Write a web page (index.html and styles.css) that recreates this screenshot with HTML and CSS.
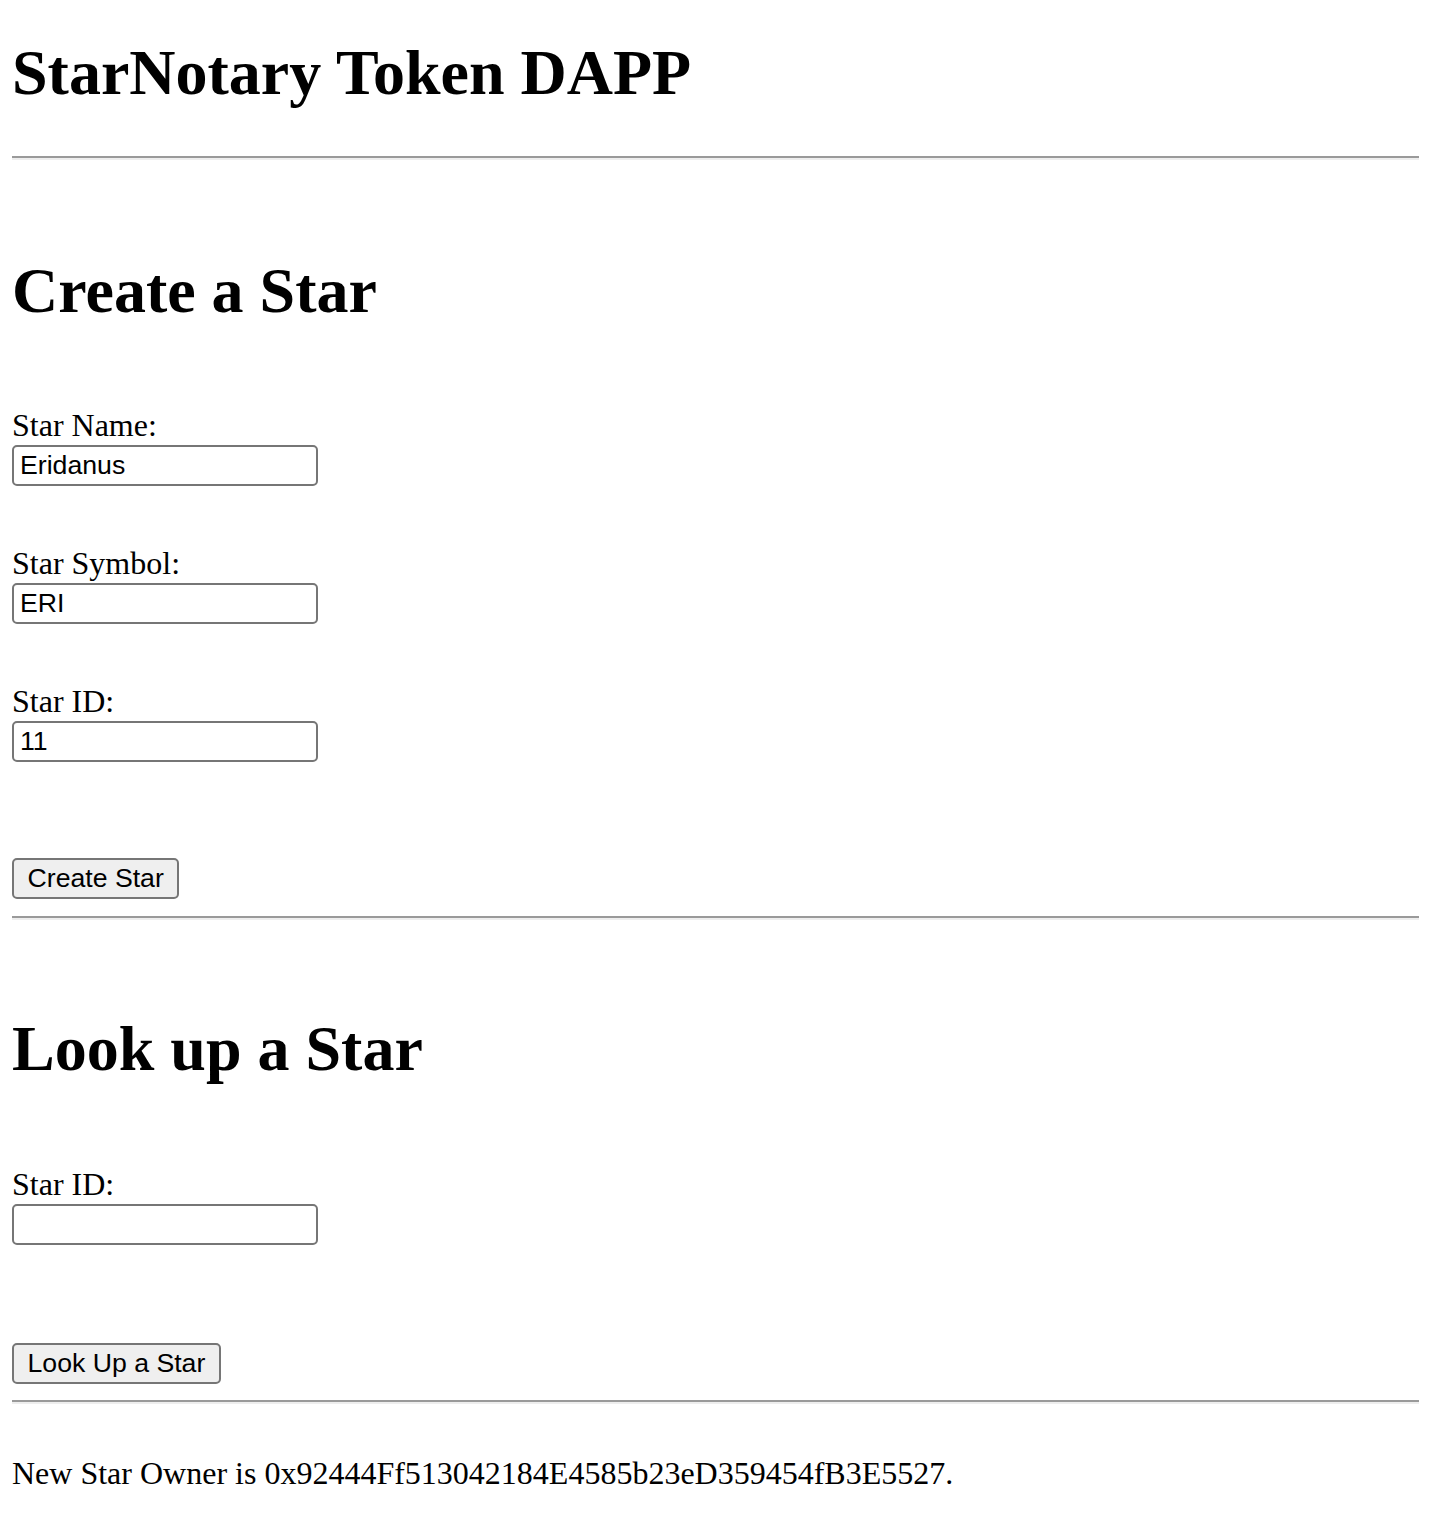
FILE: index.html
```html
<!DOCTYPE html>
<html lang="en">
<head>
<meta charset="utf-8">
<title>StarNotary Token DAPP</title>
<link rel="stylesheet" href="styles.css">
</head>
<body>
<h1 class="title">StarNotary Token DAPP</h1>
<hr class="rule rule-top">

<section class="create">
  <h1 class="heading heading-create">Create a Star</h1>
  <div class="field field-first">
    <label class="label" for="starName">Star Name:</label>
    <input class="input" id="starName" type="text" value="Eridanus">
  </div>
  <div class="field">
    <label class="label" for="starSymbol">Star Symbol:</label>
    <input class="input" id="starSymbol" type="text" value="ERI">
  </div>
  <div class="field">
    <label class="label" for="starId">Star ID:</label>
    <input class="input" id="starId" type="text" value="11">
  </div>
  <button class="btn btn-create" type="button">Create Star</button>
</section>
<hr class="rule rule-mid">

<section class="lookup">
  <h1 class="heading heading-lookup">Look up a Star</h1>
  <div class="field field-lookup">
    <label class="label" for="lookid">Star ID:</label>
    <input class="input" id="lookid" type="text" value="">
  </div>
  <button class="btn btn-lookup" type="button">Look Up a Star</button>
</section>
<hr class="rule rule-bottom">

<p class="status">New Star Owner is 0x92444Ff513042184E4585b23eD359454fB3E5527.</p>
</body>
</html>
```

FILE: styles.css
```css
html, body {
  background: #ffffff;
}
body {
  margin: 0 13px 0 12px;
  font-family: "Liberation Serif", "Times New Roman", serif;
  color: #000000;
}
.title,
.heading {
  font-size: 64px;
  font-weight: bold;
  line-height: 74px;
  margin: 0;
}
.title {
  padding-top: 36px;
}
.rule {
  display: block;
  height: 0;
  margin: 0;
  border: 0;
  border-top: 2px solid #9a9a9a;
  border-bottom: 2px solid #eeeeee;
}
.rule-top { margin-top: 46px; }
.heading-create { margin-top: 94px; }
.heading-lookup { margin-top: 92px; }

.field {
  display: flex;
  flex-direction: column;
  align-items: flex-start;
  margin-top: 60px;
}
.field-first { margin-top: 79px; }
.field-lookup { margin-top: 81px; }

.label {
  font-size: 32px;
  line-height: 37px;
  padding-bottom: 1px;
}
.input {
  box-sizing: border-box;
  width: 306px;
  height: 41px;
  margin: 0;
  padding: 0 6px;
  border: 2px solid #767676;
  border-radius: 5px;
  background: #ffffff;
  font-family: "Liberation Sans", Arial, sans-serif;
  font-size: 26.67px;
  color: #000000;
}
.field + .field { margin-top: 59px; }
.btn {
  display: block;
  box-sizing: border-box;
  height: 41px;
  margin: 96px 0 0;
  padding: 0 13.5px;
  border: 2px solid #767676;
  border-radius: 5px;
  background: #efefef;
  font-family: "Liberation Sans", Arial, sans-serif;
  font-size: 26.67px;
  color: #000000;
}
.btn-lookup { margin-top: 98px; }
.field-lookup { margin-top: 80px; }
.rule-mid { margin-top: 17px; }
.rule-bottom { margin-top: 16px; }
.status {
  margin: 51px 0 0;
  font-size: 32px;
  line-height: 37px;
}
```
